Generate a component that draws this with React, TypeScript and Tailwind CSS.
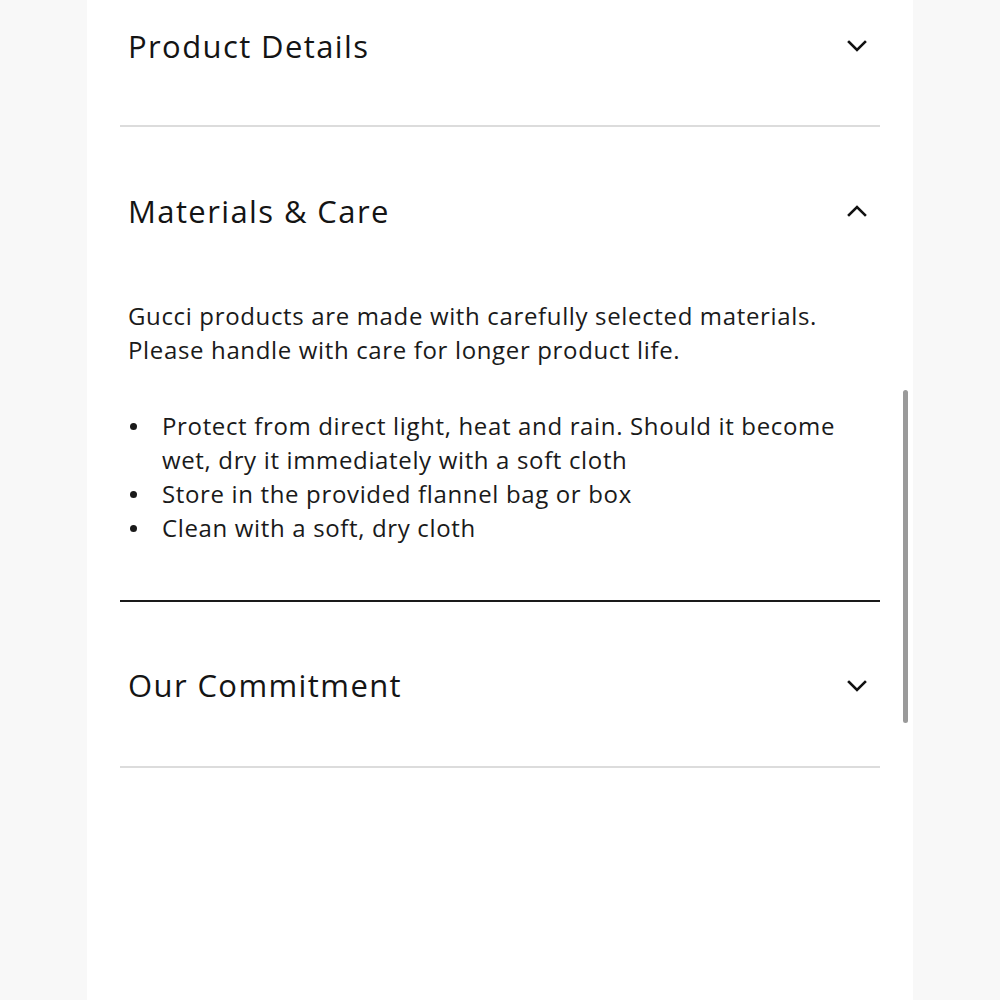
import { ReactNode } from 'react'

function Chevron({ up }: { up?: boolean }) {
  return (
    <svg width="20" height="12" viewBox="0 0 20 12" fill="none" className="shrink-0">
      <polyline
        points={up ? '2,10 10,2 18,10' : '2,2 10,10 18,2'}
        stroke="#111"
        strokeWidth="2.6"
        strokeLinecap="square"
      />
    </svg>
  )
}

function Header({ title, up, className }: { title: string; up?: boolean; className: string }) {
  return (
    <div className={`flex items-center justify-between pl-2 pr-[13px] ${className}`}>
      <h2 className="text-[31px] leading-none text-[#141414] tracking-[1.4px]">{title}</h2>
      <Chevron up={up} />
    </div>
  )
}

const care = [
  'Protect from direct light, heat and rain. Should it become wet, dry it immediately with a soft cloth',
  'Store in the provided flannel bag or box',
  'Clean with a soft, dry cloth',
]

function Bullet({ children }: { children: ReactNode }) {
  return (
    <li className="flex">
      <span className="w-[34px] shrink-0 h-[34px] flex items-center pl-[2px]">
        <span className="w-[7px] h-[7px] rounded-full bg-[#1a1a1a]" />
      </span>
      <span>{children}</span>
    </li>
  )
}

export default function App() {
  return (
    <div
      className="min-h-screen flex bg-[#f8f8f8]"
      style={{ fontFamily: '"Open Sans", Lato, sans-serif' }}
    >
      <div className="relative ml-[87px] w-[826px] min-h-screen bg-white px-[33px]">
        {/* Product Details (scrolled, top cut off) */}
        <div className="border-b-2 border-[#dcdcdc]">
          <Header title="Product Details" className="h-[92px]" />
          <div className="h-[33px]" />
        </div>

        {/* Materials & Care (open) */}
        <div className="border-b-2 border-[#1a1a1a]">
          <Header title="Materials & Care" up className="h-[168px]" />
          <div className="pl-2 pb-[55px] text-[24px] leading-[34px] tracking-[0.65px] text-[#1a1a1a] max-w-[722px]">
            <p className="mt-[4px]">
              Gucci products are made with carefully selected materials. Please handle with care for
              longer product life.
            </p>
            <ul className="mt-[42px]">
              {care.map((c) => (
                <Bullet key={c}>{c}</Bullet>
              ))}
            </ul>
          </div>
        </div>

        {/* Our Commitment */}
        <div className="border-b-2 border-[#dcdcdc]">
          <Header title="Our Commitment" className="h-[164px] pt-[3px]" />
        </div>

        {/* scrollbar */}
        <div className="absolute left-[816px] top-[390px] w-[5px] h-[333px] rounded-full bg-[#9a9a9a]" />
      </div>
    </div>
  )
}
